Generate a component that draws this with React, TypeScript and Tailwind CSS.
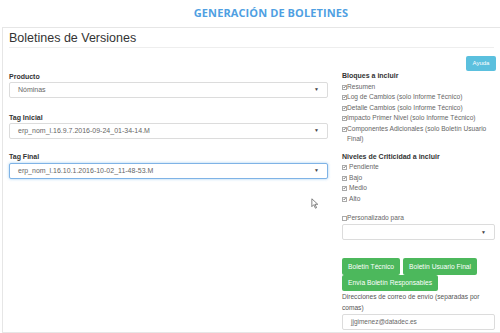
import { Fragment } from 'react';

const BLOQUES = [
  'Resumen',
  'Log de Cambios (solo Informe Técnico)',
  'Detalle Cambios (solo Informe Técnico)',
  'Impacto Primer Nivel (solo Informe Técnico)',
  'Componentes Adicionales (solo Boletín Usuario Final)',
];

const NIVELES = ['Pendiente', 'Bajo', 'Medio', 'Alto'];

function Check({ checked = true }: { checked?: boolean }) {
  return (
    <span className="inline-flex items-center justify-center w-[5px] h-[5px] mt-[3px] shrink-0 border border-[#aaa] bg-white">
      {checked && (
        <svg viewBox="0 0 10 10" className="w-[6px] h-[6px] -mt-[1px]">
          <path d="M1.5 5.5 L4 8 L9 1.5" stroke="#444" strokeWidth="2" fill="none" />
        </svg>
      )}
    </span>
  );
}

function Select({ value, focus = false }: { value: string; focus?: boolean }) {
  return (
    <div
      className={`flex items-center justify-between h-[16px] px-[8px] bg-white rounded-[2px] border ${
        focus ? 'border-[#7fb3e6] shadow-[0_0_3px_rgba(102,175,233,0.6)]' : 'border-[#dcdcdc]'
      }`}
    >
      <span className="text-[7px] text-[#666]">{value}</span>
      <span className="text-[5px] text-[#444]">▼</span>
    </div>
  );
}

function Label({ children }: { children: string }) {
  return <div className="text-[7px] font-bold text-[#333] leading-[10px] h-[10px]">{children}</div>;
}

export default function App() {
  return (
    <div className="w-[500px] h-[333px] bg-white overflow-hidden font-['Liberation_Sans',Arial,sans-serif]">
      <div className="h-[27px] flex items-center justify-center pl-[42px]">
        <h1 className="text-[11px] font-bold text-[#4f9fe2] font-['Open_Sans',sans-serif] tracking-[0.1px]">
          GENERACIÓN DE BOLETINES
        </h1>
      </div>
      <div className="ml-[2px] h-[306px] border border-[#e6e6e6] border-r-0 pl-[6px]">
        <div className="h-[20px] pt-[2px] mr-[6px] text-[12.5px] text-[#333] leading-[16px] border-b border-[#eee]">
          Boletines de Versiones
        </div>
        <div className="flex justify-end pr-[4px] mt-[8px]">
          <button className="h-[15px] w-[30px] rounded-[2px] bg-[#5bc0de] text-white text-[6px]">Ayuda</button>
        </div>
        <div className="flex">
          <div className="w-[319px]">
            <div className="mt-[1px]">
              <Label>Producto</Label>
              <Select value="Nóminas" />
            </div>
            <div className="mt-[15px]">
              <Label>Tag Inicial</Label>
              <Select value="erp_nom_l.16.9.7.2016-09-24_01-34-14.M" />
            </div>
            <div className="mt-[13px]">
              <Label>Tag Final</Label>
              <div className="mt-[1px]">
                <Select value="erp_nom_l.16.10.1.2016-10-02_11-48-53.M" focus />
              </div>
            </div>
            <div className="flex justify-end pr-[9px] mt-[19px]">
              <svg viewBox="0 0 10 14" className="w-[8px] h-[11px]">
                <path d="M1 1 L1 11 L3.5 8.5 L5.5 13 L7 12.3 L5 8 L8.5 8 Z" fill="#fff" stroke="#555" strokeWidth="0.9" />
              </svg>
            </div>
          </div>
          <div className="ml-[14px] w-[153px] text-[6.6px] text-[#666] leading-[10.4px]">
            <Label>Bloques a incluir</Label>
            <div className="mt-[1px]">
              {BLOQUES.map((b) => (
                <div key={b} className="flex">
                  <Check />
                  <span>{b}</span>
                </div>
              ))}
            </div>
            <div className="mt-[8px]">
              <Label>Niveles de Criticidad a incluir</Label>
              {NIVELES.map((n) => (
                <Fragment key={n}>
                  <div className="flex">
                    <Check />
                    <span className="ml-[2px]">{n}</span>
                  </div>
                </Fragment>
              ))}
            </div>
            <div className="mt-[9px] flex">
              <Check checked={false} />
              <span>Personalizado para</span>
            </div>
            <div className="mt-[1px]">
              <Select value="" />
            </div>
            <div className="mt-[18px] flex flex-wrap gap-x-[3px] w-[140px]">
              <button className="h-[17px] px-[6px] rounded-[2px] bg-[#4cb85c] text-white text-[6.7px]">Boletín Técnico</button>
              <button className="h-[17px] px-[6px] rounded-[2px] bg-[#4cb85c] text-white text-[6.7px]">Boletín Usuario Final</button>
              <button className="h-[16px] px-[6px] rounded-[2px] bg-[#4cb85c] text-white text-[6.7px]">Envía Boletín Responsables</button>
            </div>
            <div className="mt-[1px] text-[#555]">Direcciones de correo de envío (separadas por comas)</div>
            <div className="mt-[1px] h-[16px] flex items-center px-[8px] border border-[#dcdcdc] rounded-[2px] text-[6.5px] text-[#666]">
              jjgimenez@datadec.es
            </div>
          </div>
        </div>
      </div>
    </div>
  );
}
